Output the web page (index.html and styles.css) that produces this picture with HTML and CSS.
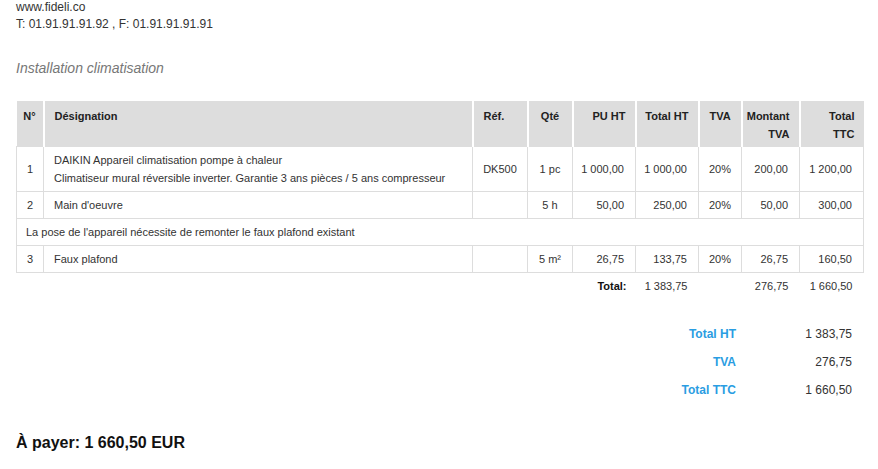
FILE: index.html
```html
<!DOCTYPE html>
<html lang="fr">
<head>
<meta charset="utf-8">
<title>Devis</title>
<link rel="stylesheet" href="styles.css">
</head>
<body>
<div class="contact">
  <div>www.fideli.co</div>
  <div>T: 01.91.91.91.92 , F: 01.91.91.91.91</div>
</div>
<h2 class="subject">Installation climatisation</h2>
<table class="lines">
  <colgroup>
    <col style="width:27px"><col style="width:429px"><col style="width:55px"><col style="width:45px"><col style="width:63px"><col style="width:63px"><col style="width:43px"><col style="width:58px"><col style="width:64px">
  </colgroup>
  <thead>
    <tr>
      <th class="c">N°</th>
      <th class="l">Désignation</th>
      <th class="l">Réf.</th>
      <th class="c">Qté</th>
      <th class="r">PU HT</th>
      <th class="r">Total HT</th>
      <th class="c">TVA</th>
      <th class="r">Montant<br>TVA</th>
      <th class="r">Total<br>TTC</th>
    </tr>
  </thead>
  <tbody>
    <tr>
      <td class="c">1</td>
      <td class="l">DAIKIN Appareil climatisation pompe à chaleur<br>Climatiseur mural réversible inverter. Garantie 3 ans pièces / 5 ans compresseur</td>
      <td class="c">DK500</td>
      <td class="c">1 pc</td>
      <td class="r">1 000,00</td>
      <td class="r">1 000,00</td>
      <td class="c">20%</td>
      <td class="r">200,00</td>
      <td class="r">1 200,00</td>
    </tr>
    <tr>
      <td class="c">2</td>
      <td class="l">Main d'oeuvre</td>
      <td class="c"></td>
      <td class="c">5 h</td>
      <td class="r">50,00</td>
      <td class="r">250,00</td>
      <td class="c">20%</td>
      <td class="r">50,00</td>
      <td class="r">300,00</td>
    </tr>
    <tr>
      <td class="note" colspan="9">La pose de l'appareil nécessite de remonter le faux plafond existant</td>
    </tr>
    <tr>
      <td class="c">3</td>
      <td class="l">Faux plafond</td>
      <td class="c"></td>
      <td class="c">5 m²</td>
      <td class="r">26,75</td>
      <td class="r">133,75</td>
      <td class="c">20%</td>
      <td class="r">26,75</td>
      <td class="r">160,50</td>
    </tr>
  </tbody>
  <tfoot>
    <tr>
      <td colspan="4"></td>
      <td class="r strong">Total:</td>
      <td class="r">1 383,75</td>
      <td></td>
      <td class="r">276,75</td>
      <td class="r">1 660,50</td>
    </tr>
  </tfoot>
</table>
<div class="summary">
  <div class="sum-grid">
    <div class="sum-label">Total HT</div><div class="sum-value">1 383,75</div>
    <div class="sum-label">TVA</div><div class="sum-value">276,75</div>
    <div class="sum-label">Total TTC</div><div class="sum-value">1 660,50</div>
  </div>
</div>
<div class="topay">À payer: 1 660,50 EUR</div>
</body>
</html>
```
FILE: styles.css
```css
html, body {
  margin: 0;
  padding: 0;
  background: #fff;
}
body {
  padding: 0 15px 0 16px;
  font-family: "Liberation Sans", Arial, sans-serif;
  color: #333;
  font-size: 12px;
}
.contact {
  line-height: 17px;
  margin-top: -1px;
}
.subject {
  margin: 0;
  padding-top: 25px;
  font-size: 14px;
  font-weight: normal;
  font-style: italic;
  color: #777;
  line-height: 20px;
  height: 20px;
}
.lines {
  margin-top: 23px;
  width: 847px;
  border-collapse: collapse;
  table-layout: fixed;
  font-size: 11px;
  line-height: 18px;
}
.lines th {
  background: #ddd;
  color: #222;
  font-weight: bold;
  vertical-align: top;
  padding: 6px 9px 3px 4px;
  border-left: 2px solid #fff;
  white-space: nowrap;
}
.lines th:first-child {
  border-left: 0;
}
.lines tbody td {
  border: 1px solid #ddd;
  padding: 4px 11px 4px 9px;
  vertical-align: middle;
}
.lines tbody td.l {
  padding-left: 10px;
}
.lines tbody td.note {
  padding-left: 9px;
}
.lines tfoot td {
  padding: 4px 11px 4px 4px;
}
.l { text-align: left; }
.c { text-align: center; }
.r { text-align: right; white-space: nowrap; }
.lines tbody td.r { padding-left: 2px; }
.lines th.l { padding-left: 10px; }
.lines th.c, .lines td.c { padding-left: 4px; padding-right: 4px; }
.lines tfoot td.strong { padding-right: 9px; }
.strong { font-weight: bold; color: #111; }
.summary {
  display: flex;
  justify-content: flex-end;
  margin-top: 21px;
}
.sum-grid {
  display: grid;
  grid-template-columns: auto 116px;
  grid-auto-rows: 28px;
  align-items: center;
  font-size: 12px;
  padding-right: 11px;
}
.sum-label {
  text-align: right;
  font-weight: bold;
  color: #2a9de2;
}
.sum-value {
  text-align: right;
}
.topay {
  margin-top: 30px;
  font-size: 16px;
  font-weight: bold;
  color: #111;
}
```
